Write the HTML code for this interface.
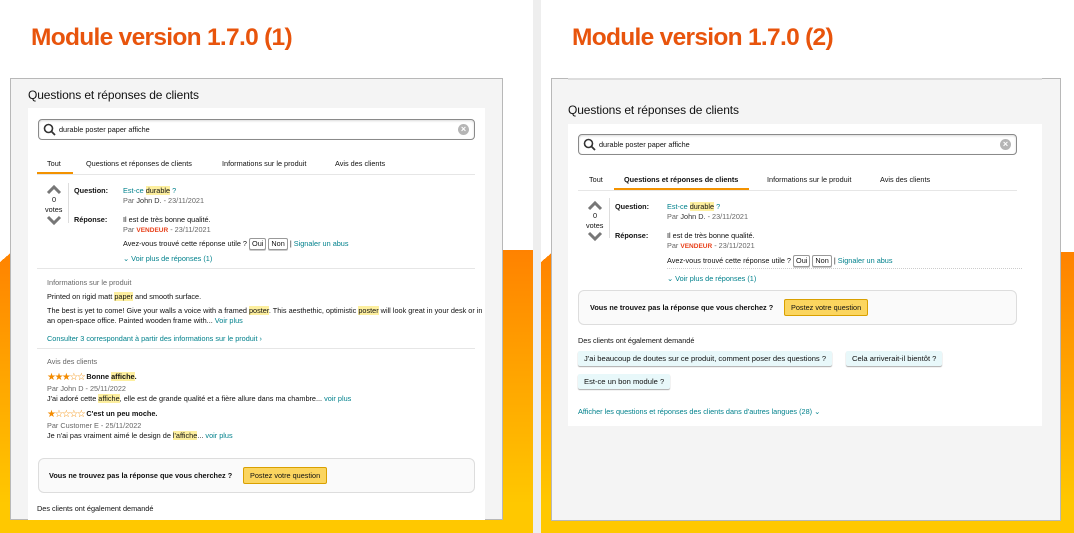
<!DOCTYPE html>
<html><head><meta charset="utf-8"><style>
*{margin:0;padding:0;box-sizing:border-box}
body{width:1074px;height:533px;position:relative;overflow:hidden;background:#fff;font-family:"Liberation Sans",sans-serif;color:#111}
.a{position:absolute;white-space:nowrap}
.bg{position:absolute;top:250px;bottom:0;background:linear-gradient(#ff8200,#ffc800 90%)}
.title{position:absolute;top:24px;font-weight:bold;font-size:24.5px;color:#e8540c;letter-spacing:-0.7px}
.card{position:absolute;top:78px;background:#f4f4f4;border:1px solid #b8b8b8}
.white{position:absolute;background:#fff}
.h{font-size:12px;color:#111;letter-spacing:-0.1px}
.s{font-size:7.3px}
.search{position:absolute;height:21px;border:1px solid #8a8a8a;border-radius:4px;background:#fff;box-shadow:inset 0 1px 2px rgba(0,0,0,.15)}
.x{position:absolute;right:5px;top:4px;width:11px;height:11px;border-radius:50%;background:#b5b5b5;color:#fff;font-size:9px;line-height:11px;text-align:center;font-weight:bold}
.teal{color:#00818c}
.gray{color:#666}
.hl{background:#fdef9f}
.b{font-weight:bold}
.btn{display:inline-block;border:1px solid #999;border-radius:2px;padding:0 2px;line-height:10px;background:#fff;box-shadow:0 1px 0 #ccc}
.box{position:absolute;border:1px solid #ddd;border-radius:6px;background:#fafafa}
.post{position:absolute;background:#fbd55f;border:1px solid #d9a000;border-radius:2px;font-size:7.3px;padding:0 6px;line-height:15px}
.chip{position:absolute;background:#e8f8fa;border-radius:2px;box-shadow:0 1px 1px #aaa;font-size:7.6px;line-height:15px;padding:0 6px}
.star{color:#f38b00;font-size:10px;letter-spacing:-1.5px;vertical-align:-1px}
.line{position:absolute;height:1px;background:#e6e6e6}
</style></head><body>
<div class="bg" style="left:0;width:533px"></div>
<div class="bg" style="left:541px;right:0;top:252px"></div>
<div class="a" style="left:533px;top:0;width:8px;height:533px;background:#eee"></div>
<div class="a" style="left:0;top:250px;width:14px;height:12px;background:linear-gradient(to bottom right,#fff 50%,transparent 50%)"></div>
<div class="a" style="left:541px;top:250px;width:14px;height:12px;background:linear-gradient(to bottom right,#fff 50%,transparent 50%)"></div>

<div class="title" style="left:31px">Module version 1.7.0 (1)</div>
<div class="title" style="left:572px">Module version 1.7.0 (2)</div>

<!-- LEFT -->
<div class="card" style="left:10px;width:493px;height:442px"></div>
<div class="a h" style="left:28px;top:88px">Questions et réponses de clients</div>
<div class="white" style="left:28px;top:108px;width:457px;height:412px"></div>
<div class="search" style="left:38px;top:119px;width:437px">
 <svg class="a" style="left:4px;top:3px" width="13" height="13" viewBox="0 0 13 13"><circle cx="5.5" cy="5.5" r="4" fill="none" stroke="#333" stroke-width="1.6"/><path d="M8.5 8.5L12 12" stroke="#333" stroke-width="1.8"/></svg>
 <span class="a s" style="left:20px;top:5px">durable poster paper affiche</span><div class="x">×</div></div>
<div class="a s" style="left:47px;top:159px">Tout</div>
<div class="a s" style="left:86px;top:159px">Questions et réponses de clients</div>
<div class="a s" style="left:222px;top:159px">Informations sur le produit</div>
<div class="a s" style="left:335px;top:159px">Avis des clients</div>
<div class="a" style="left:37px;top:172px;width:36px;height:2px;background:#f39200"></div>
<div class="line" style="left:37px;top:174px;width:438px"></div>
<svg class="a" style="left:46px;top:184px" width="16" height="42" viewBox="0 0 16 42"><path d="M2 9L8 3l6 6" fill="none" stroke="#777" stroke-width="3"/><path d="M2 33l6 6 6-6" fill="none" stroke="#777" stroke-width="3"/></svg>
<div class="a s" style="left:52px;top:195px">0</div>
<div class="a s" style="left:45px;top:205px">votes</div>
<div class="a" style="left:68px;top:183px;width:1px;height:40px;background:#ddd"></div>
<div class="a s b" style="left:74px;top:186px">Question:</div>
<div class="a s teal" style="left:123px;top:186px">Est-ce <span class="hl" style="color:#111">durable</span> ?</div>
<div class="a s gray" style="left:123px;top:196px">Par <span style="color:#333">John D.</span> - 23/11/2021</div>
<div class="a s b" style="left:74px;top:215px">Réponse:</div>
<div class="a s" style="left:123px;top:215px">Il est de très bonne qualité.</div>
<div class="a s gray" style="left:123px;top:225px">Par <span class="b" style="color:#e8401a;font-size:6.5px">VENDEUR</span> - 23/11/2021</div>
<div class="a s" style="left:123px;top:238px">Avez-vous trouvé cette réponse utile ? <span class="btn">Oui</span> <span class="btn">Non</span> | <span class="teal">Signaler un abus</span></div>
<div class="a s teal" style="left:123px;top:254px">⌄ Voir plus de réponses (1)</div>
<div class="line" style="left:37px;top:268px;width:438px"></div>
<div class="a s gray" style="left:47px;top:278px">Informations sur le produit</div>
<div class="a s" style="left:47px;top:292px">Printed on rigid matt <span class="hl">paper</span> and smooth surface.</div>
<div class="a s" style="left:47px;top:306px">The best is yet to come! Give your walls a voice with a framed <span class="hl">poster</span>. This aesthethic, optimistic <span class="hl">poster</span> will look great in your desk or in</div>
<div class="a s" style="left:47px;top:316px">an open-space office. Painted wooden frame with... <span class="teal">Voir plus</span></div>
<div class="a s teal" style="left:47px;top:334px">Consulter 3 correspondant à partir des informations sur le produit ›</div>
<div class="line" style="left:37px;top:348px;width:438px"></div>
<div class="a s gray" style="left:47px;top:357px">Avis des clients</div>
<div class="a s" style="left:47px;top:372px"><span class="star">★★★☆☆</span> <span class="b">Bonne <span class="hl">affiche</span>.</span></div>
<div class="a s gray" style="left:47px;top:384px">Par John D - 25/11/2022</div>
<div class="a s" style="left:47px;top:394px">J'ai adoré cette <span class="hl">affiche</span>, elle est de grande qualité et a fière allure dans ma chambre... <span class="teal">voir plus</span></div>
<div class="a s" style="left:47px;top:409px"><span class="star">★☆☆☆☆</span> <span class="b">C'est un peu moche.</span></div>
<div class="a s gray" style="left:47px;top:421px">Par Customer E - 25/11/2022</div>
<div class="a s" style="left:47px;top:431px">Je n'ai pas vraiment aimé le design de <span class="hl">l'affiche</span>... <span class="teal">voir plus</span></div>
<div class="box" style="left:38px;top:458px;width:437px;height:35px"></div>
<div class="a s b" style="left:49px;top:471px">Vous ne trouvez pas la réponse que vous cherchez ?</div>
<div class="post" style="left:243px;top:467px">Postez votre question</div>
<div class="a s" style="left:37px;top:504px">Des clients ont également demandé</div>

<!-- RIGHT -->
<div class="card" style="left:551px;width:510px;height:443px"></div>
<div class="a" style="left:568px;top:78px;width:474px;height:2px;background:#ddd"></div>
<div class="a h" style="left:568px;top:103px">Questions et réponses de clients</div>
<div class="white" style="left:568px;top:124px;width:474px;height:302px"></div>
<div class="search" style="left:578px;top:134px;width:439px">
 <svg class="a" style="left:4px;top:3px" width="13" height="13" viewBox="0 0 13 13"><circle cx="5.5" cy="5.5" r="4" fill="none" stroke="#333" stroke-width="1.6"/><path d="M8.5 8.5L12 12" stroke="#333" stroke-width="1.8"/></svg>
 <span class="a s" style="left:20px;top:5px">durable poster paper affiche</span><div class="x">×</div></div>
<div class="a s" style="left:589px;top:175px">Tout</div>
<div class="a s b" style="left:624px;top:175px">Questions et réponses de clients</div>
<div class="a s" style="left:767px;top:175px">Informations sur le produit</div>
<div class="a s" style="left:880px;top:175px">Avis des clients</div>
<div class="a" style="left:614px;top:188px;width:135px;height:2px;background:#f39200"></div>
<div class="line" style="left:578px;top:190px;width:439px"></div>
<svg class="a" style="left:587px;top:200px" width="16" height="42" viewBox="0 0 16 42"><path d="M2 9L8 3l6 6" fill="none" stroke="#777" stroke-width="3"/><path d="M2 33l6 6 6-6" fill="none" stroke="#777" stroke-width="3"/></svg>
<div class="a s" style="left:593px;top:211px">0</div>
<div class="a s" style="left:586px;top:221px">votes</div>
<div class="a" style="left:609px;top:198px;width:1px;height:40px;background:#ddd"></div>
<div class="a s b" style="left:615px;top:202px">Question:</div>
<div class="a s teal" style="left:667px;top:202px">Est-ce <span class="hl" style="color:#111">durable</span> ?</div>
<div class="a s gray" style="left:667px;top:212px">Par <span style="color:#333">John D.</span> - 23/11/2021</div>
<div class="a s b" style="left:615px;top:231px">Réponse:</div>
<div class="a s" style="left:667px;top:231px">Il est de très bonne qualité.</div>
<div class="a s gray" style="left:667px;top:241px">Par <span class="b" style="color:#e8401a;font-size:6.5px">VENDEUR</span> - 23/11/2021</div>
<div class="a s" style="left:667px;top:255px">Avez-vous trouvé cette réponse utile ? <span class="btn">Oui</span> <span class="btn">Non</span> | <span class="teal">Signaler un abus</span></div>
<div class="a" style="left:667px;top:268px;width:355px;border-top:1px dotted #ccc"></div>
<div class="a s teal" style="left:667px;top:274px">⌄ Voir plus de réponses (1)</div>
<div class="box" style="left:578px;top:290px;width:439px;height:35px"></div>
<div class="a s b" style="left:590px;top:303px">Vous ne trouvez pas la réponse que vous cherchez ?</div>
<div class="post" style="left:784px;top:299px">Postez votre question</div>
<div class="a s" style="left:578px;top:336px">Des clients ont également demandé</div>
<div class="chip" style="left:578px;top:351px">J'ai beaucoup de doutes sur ce produit, comment poser des questions ?</div>
<div class="chip" style="left:846px;top:351px">Cela arriverait-il bientôt ?</div>
<div class="chip" style="left:578px;top:374px">Est-ce un bon module ?</div>
<div class="a s teal" style="left:578px;top:407px">Afficher les questions et réponses des clients dans d'autres langues (28) ⌄</div>
</body></html>
